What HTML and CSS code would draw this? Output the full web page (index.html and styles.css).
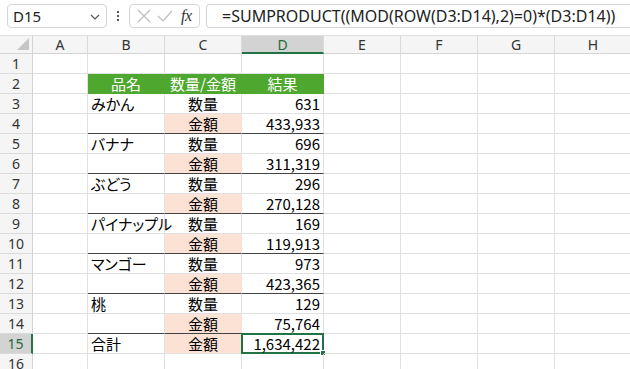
FILE: index.html
```html
<!DOCTYPE html>
<html lang="ja">
<head>
<meta charset="utf-8">
<link rel="stylesheet" href="styles.css">
</head>
<body>
<div class="toolbar">
  <div class="namebox"><span>D15</span>
    <svg class="chev" width="10" height="6" viewBox="0 0 10 6"><path d="M1 1 L5 5 L9 1" fill="none" stroke="#555" stroke-width="1.2"/></svg>
  </div>
  <div class="dots"><i></i><i></i><i></i></div>
  <div class="fxbox">
    <svg width="14" height="14" viewBox="0 0 14 14"><path d="M1 1 L13 13 M13 1 L1 13" stroke="#bdbdbd" stroke-width="1.2" fill="none"/></svg>
    <svg width="16" height="14" viewBox="0 0 16 14"><path d="M1 7 L6 12 L15 2" stroke="#bdbdbd" stroke-width="1.2" fill="none"/></svg>
    <span class="fx">fx</span>
  </div>
  <div class="formula">=SUMPRODUCT((MOD(ROW(D3:D14),2)=0)*(D3:D14))</div>
</div>
<div class="sheet">
  <div class="corner"><span class="tri"></span></div>
  <div class="ch">A</div><div class="ch">B</div><div class="ch">C</div><div class="ch sel">D</div><div class="ch">E</div><div class="ch">F</div><div class="ch">G</div><div class="ch">H</div>

  <div class="rh">1</div><div class="c"></div><div class="c"></div><div class="c"></div><div class="c"></div><div class="c"></div><div class="c"></div><div class="c"></div><div class="c"></div>

  <div class="rh">2</div><div class="c"></div><div class="c hd">品名</div><div class="c hd">数量/金額</div><div class="c hd">結果</div><div class="c"></div><div class="c"></div><div class="c"></div><div class="c"></div>

  <div class="rh">3</div><div class="c"></div><div class="c tx">みかん</div><div class="c ctr">数量</div><div class="c num">631</div><div class="c"></div><div class="c"></div><div class="c"></div><div class="c"></div>
  <div class="rh">4</div><div class="c"></div><div class="c sep"></div><div class="c ctr pk sep">金額</div><div class="c num sep">433,933</div><div class="c"></div><div class="c"></div><div class="c"></div><div class="c"></div>

  <div class="rh">5</div><div class="c"></div><div class="c tx">バナナ</div><div class="c ctr">数量</div><div class="c num">696</div><div class="c"></div><div class="c"></div><div class="c"></div><div class="c"></div>
  <div class="rh">6</div><div class="c"></div><div class="c sep"></div><div class="c ctr pk sep">金額</div><div class="c num sep">311,319</div><div class="c"></div><div class="c"></div><div class="c"></div><div class="c"></div>

  <div class="rh">7</div><div class="c"></div><div class="c tx">ぶどう</div><div class="c ctr">数量</div><div class="c num">296</div><div class="c"></div><div class="c"></div><div class="c"></div><div class="c"></div>
  <div class="rh">8</div><div class="c"></div><div class="c sep"></div><div class="c ctr pk sep">金額</div><div class="c num sep">270,128</div><div class="c"></div><div class="c"></div><div class="c"></div><div class="c"></div>

  <div class="rh">9</div><div class="c"></div><div class="c tx">パイナップル</div><div class="c ctr">数量</div><div class="c num">169</div><div class="c"></div><div class="c"></div><div class="c"></div><div class="c"></div>
  <div class="rh">10</div><div class="c"></div><div class="c sep"></div><div class="c ctr pk sep">金額</div><div class="c num sep">119,913</div><div class="c"></div><div class="c"></div><div class="c"></div><div class="c"></div>

  <div class="rh">11</div><div class="c"></div><div class="c tx">マンゴー</div><div class="c ctr">数量</div><div class="c num">973</div><div class="c"></div><div class="c"></div><div class="c"></div><div class="c"></div>
  <div class="rh">12</div><div class="c"></div><div class="c sep"></div><div class="c ctr pk sep">金額</div><div class="c num sep">423,365</div><div class="c"></div><div class="c"></div><div class="c"></div><div class="c"></div>

  <div class="rh">13</div><div class="c"></div><div class="c tx">桃</div><div class="c ctr">数量</div><div class="c num">129</div><div class="c"></div><div class="c"></div><div class="c"></div><div class="c"></div>
  <div class="rh">14</div><div class="c"></div><div class="c sep"></div><div class="c ctr pk sep">金額</div><div class="c num sep">75,764</div><div class="c"></div><div class="c"></div><div class="c"></div><div class="c"></div>

  <div class="rh rsel">15</div><div class="c"></div><div class="c tx">合計</div><div class="c ctr pk">金額</div><div class="c num active">1,634,422<span class="handle"></span></div><div class="c"></div><div class="c"></div><div class="c"></div><div class="c"></div>

  <div class="rh">16</div><div class="c"></div><div class="c"></div><div class="c"></div><div class="c"></div><div class="c"></div><div class="c"></div><div class="c"></div><div class="c"></div>
</div>
</body>
</html>
```

FILE: styles.css
```css
* { box-sizing: border-box; }
html, body { margin: 0; padding: 0; background: #fff; }
body { width: 630px; height: 369px; overflow: hidden; font-family: "Noto Sans CJK JP", "Noto Sans", sans-serif; color: #000; }

.toolbar { height: 35px; display: flex; align-items: flex-start; padding: 4px 0 0 7px; background: #fff; }
.namebox { width: 100px; height: 24px; border: 1px solid #d6d6d6; border-radius: 4px; display: flex; align-items: center; justify-content: space-between; padding: 0 6px 0 5px; font-family: "Noto Sans", sans-serif; font-size: 15px; color: #222; }
.chev { margin-top: 1px; }
.dots { width: 22px; height: 24px; display: flex; flex-direction: column; align-items: center; justify-content: center; gap: 2px; }
.dots i { display: block; width: 2px; height: 2px; background: #555; }
.fxbox { width: 71px; height: 24px; border: 1px solid #d6d6d6; border-radius: 4px; display: flex; align-items: center; padding: 0 5px 0 7px; gap: 6px; }
.fx { font-family: "Liberation Serif", serif; font-style: italic; font-size: 16px; color: #333; margin-left: 2px; letter-spacing: -0.5px; }
.formula { flex: 1; height: 24px; margin-left: 6px; border: 1px solid #d6d6d6; border-right: none; border-radius: 4px 0 0 4px; padding-left: 15px; font-family: "Noto Sans", sans-serif; font-size: 16px; line-height: 22px; color: #222; white-space: nowrap; overflow: hidden; }

.sheet { display: grid; grid-template-columns: 33px 55px 77px 77px 82px 77px 77px 77px 77px; grid-template-rows: 19px repeat(16, 20px); }
.corner { background: #f5f5f5; border-right: 1px solid #d4d4d4; border-bottom: 1px solid #d4d4d4; border-top: 1px solid #e1e1e1; position: relative; }
.tri { position: absolute; right: 3px; bottom: 3px; width: 0; height: 0; border-left: 12px solid transparent; border-bottom: 12px solid #c6c6c6; }
.ch { background: #f5f5f5; border-top: 1px solid #e1e1e1; border-right: 1px solid #dadada; border-bottom: 1px solid #d4d4d4; display: flex; align-items: center; justify-content: center; font-family: "Noto Sans", sans-serif; font-size: 14px; color: #333; }
.ch.sel { background: #d3d3d3; border-bottom: 2px solid #217346; color: #1e6b3c; }
.rh { background: #f5f5f5; border-right: 1px solid #d4d4d4; border-bottom: 1px solid #dadada; display: flex; align-items: center; justify-content: center; font-family: "Noto Sans", sans-serif; font-size: 14px; color: #333; }
.rh.rsel { background: #d3d3d3; border-right: 2px solid #217346; color: #1e6b3c; }

.c { border-right: 1px solid #e1e1e1; border-bottom: 1px solid #e1e1e1; font-size: 15px; line-height: 19px; white-space: nowrap; display: flex; align-items: center; position: relative; font-feature-settings: "palt" 1; }
.tx { padding-left: 3px; }
.ctr { justify-content: center; }
.num { justify-content: flex-end; padding-right: 3px; }
.hd { background: #4ea72e; border-color: #4ea72e; color: #fff; justify-content: center; }
.pk { background: #fbe2d5; border-right-color: #fbe2d5; }
.sep { border-bottom: 1px solid #444; }
.active { border: 2px solid #217346; margin: -1px 0 0 -1px; padding-right: 2px; }
.handle { position: absolute; right: -4px; bottom: -4px; width: 6px; height: 6px; background: #217346; border: 1px solid #fff; }
```
